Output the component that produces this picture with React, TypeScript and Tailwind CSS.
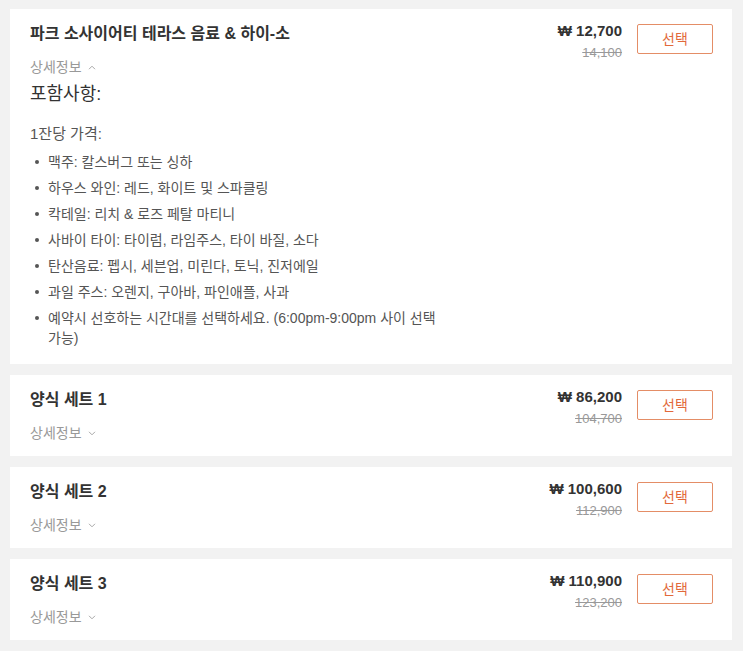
import React from "react";

type Option = {
  name: string;
  price: string;
  original: string;
  open?: boolean;
};

const options: Option[] = [
  { name: "파크 소사이어티 테라스 음료 & 하이-소", price: "12,700", original: "14,100", open: true },
  { name: "양식 세트 1", price: "86,200", original: "104,700" },
  { name: "양식 세트 2", price: "100,600", original: "112,900" },
  { name: "양식 세트 3", price: "110,900", original: "123,200" },
];

const included = [
  "맥주: 칼스버그 또는 싱하",
  "하우스 와인: 레드, 화이트 및 스파클링",
  "칵테일: 리치 & 로즈 페탈 마티니",
  "사바이 타이: 타이럼, 라임주스, 타이 바질, 소다",
  "탄산음료: 펩시, 세븐업, 미린다, 토닉, 진저에일",
  "과일 주스: 오렌지, 구아바, 파인애플, 사과",
  "예약시 선호하는 시간대를 선택하세요. (6:00pm-9:00pm 사이 선택 가능)",
];

function Chevron({ up }: { up?: boolean }) {
  return (
    <svg width="8" height="5" viewBox="0 0 8 5" className="ml-[6px]">
      <path
        d={up ? "M1 4.2 L4 1.2 L7 4.2" : "M1 0.8 L4 3.8 L7 0.8"}
        fill="none"
        stroke="#a8a8a8"
        strokeWidth="1"
      />
    </svg>
  );
}

function Details() {
  return (
    <div className="mb-[3px]">
      <div className="mt-[5px] text-[18px] leading-6 text-[#333]">포함사항:</div>
      <div className="mt-[18px] text-[15px] leading-5 text-[#555]">1잔당 가격:</div>
      <ul className="mt-2 flex flex-col gap-[6px]">
        {included.map((item) => (
          <li key={item} className="flex items-start text-[14px] leading-5 text-[#555]">
            <span className="ml-[5px] mt-[8px] h-[4px] w-[4px] shrink-0 rounded-full bg-[#555]" />
            <span className="ml-[9px]">{item}</span>
          </li>
        ))}
      </ul>
    </div>
  );
}

function OptionCard({ opt }: { opt: Option }) {
  return (
    <div className="flex items-start justify-between bg-white pb-[13px] pl-5 pr-[19px] pt-3">
      <div className="w-[420px]">
        <div className="text-[16px] font-bold leading-[26px] text-[#333]">{opt.name}</div>
        <div className="mt-[10px] flex items-center text-[14px] leading-5 text-[#999]">
          상세정보
          <Chevron up={opt.open} />
        </div>
        {opt.open && <Details />}
      </div>
      <div className="flex items-start gap-[15px]">
        <div className="flex flex-col items-end">
          <div className="text-[15px] font-bold leading-5 text-[#333]">₩ {opt.price}</div>
          <div className="mt-[2px] text-[13px] leading-5 text-[#999] line-through">{opt.original}</div>
        </div>
        <button className="mt-[3px] h-[30px] w-[76px] rounded-[2px] border border-[#e48d66] bg-white text-[14px] text-[#e2693b]">
          선택
        </button>
      </div>
    </div>
  );
}

export default function App() {
  return (
    <div
      className="flex min-h-screen flex-col gap-[11px] bg-[#f2f2f2] pl-[10px] pr-[11px] pt-[9px] pb-3"
      style={{ fontFamily: '"Liberation Sans", "Noto Sans CJK KR", sans-serif' }}
    >
      {options.map((opt) => (
        <OptionCard key={opt.name} opt={opt} />
      ))}
    </div>
  );
}
